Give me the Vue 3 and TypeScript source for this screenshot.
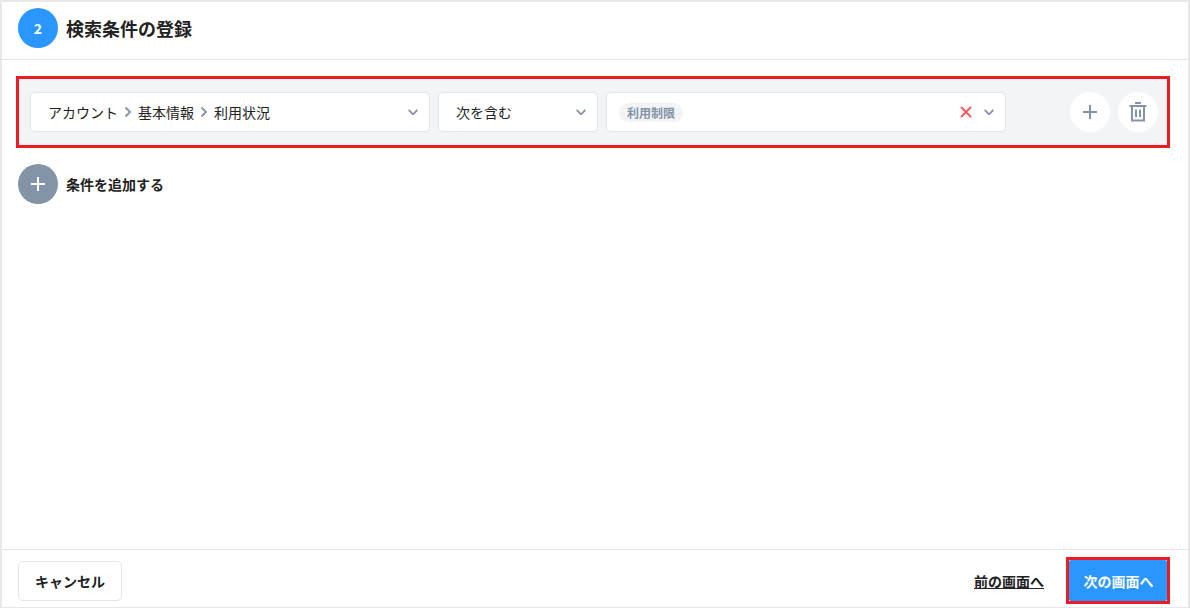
<template>
  <div class="page">
    <header class="head">
      <span class="step">2</span>
      <h1 class="title">検索条件の登録</h1>
    </header>

    <main class="body">
      <div class="highlight">
        <div class="condition">
          <div class="select field-wide">
            <div class="crumbs">
              <template v-for="(part, i) in fieldPath" :key="part">
                <svg v-if="i > 0" class="crumb-arrow" viewBox="0 0 8 12" fill="none">
                  <path d="M1.5 1.5L6 6L1.5 10.5" stroke="#8494a8" stroke-width="1.8" />
                </svg>
                <span>{{ part }}</span>
              </template>
            </div>
            <svg class="chevron" viewBox="0 0 10 7" fill="none">
              <path d="M0.7 1L5 5.3L9.3 1" stroke="#8494a8" stroke-width="1.8" />
            </svg>
          </div>
          <div class="select field-op">
            <span class="op-label">次を含む</span>
            <svg class="chevron" viewBox="0 0 10 7" fill="none">
              <path d="M0.7 1L5 5.3L9.3 1" stroke="#8494a8" stroke-width="1.8" />
            </svg>
          </div>
          <div class="select field-value">
            <span class="tag">利用制限</span>
            <svg class="clear" viewBox="0 0 12 12" fill="none">
              <path d="M1 1L11 11M11 1L1 11" stroke="#ff5a5f" stroke-width="2" />
            </svg>
            <svg class="chevron" viewBox="0 0 10 7" fill="none">
              <path d="M0.7 1L5 5.3L9.3 1" stroke="#8494a8" stroke-width="1.8" />
            </svg>
          </div>
          <div class="actions">
            <button class="round">
              <svg width="16" height="16" viewBox="0 0 16 16" fill="none">
                <path d="M8 1V15M1 8H15" stroke="#8494a8" stroke-width="2" />
              </svg>
            </button>
            <button class="round">
              <svg width="18" height="20" viewBox="0 0 18 20" fill="none">
                <path d="M0.5 4H17.5M6 1H12M3 4V18.5H15V4M7 7.5V15M11 7.5V15" stroke="#8494a8" stroke-width="2" />
              </svg>
            </button>
          </div>
        </div>
      </div>

      <div class="add-row">
        <span class="add-circle">
          <svg width="16" height="16" viewBox="0 0 16 16" fill="none">
            <path d="M8 1V15M1 8H15" stroke="#fff" stroke-width="2" />
          </svg>
        </span>
        <span class="add-label">条件を追加する</span>
      </div>
    </main>

    <footer class="foot">
      <button class="cancel">キャンセル</button>
      <div class="foot-right">
        <a class="prev">前の画面へ</a>
        <div class="next-frame">
          <button class="next">次の画面へ</button>
        </div>
      </div>
    </footer>
  </div>
</template>

<script setup lang="ts">
const fieldPath: string[] = ['アカウント', '基本情報', '利用状況']
</script>

<style>
html,
body {
  margin: 0;
  background: #fff;
}
</style>

<style scoped>
.page {
  box-sizing: border-box;
  width: 1190px;
  height: 608px;
  display: flex;
  flex-direction: column;
  border: 2px solid #e8e8e8;
  border-bottom-width: 1px;
  background: #fff;
  color: #222;
  font-family: "Noto Sans CJK JP", "Noto Sans", sans-serif;
}

.head {
  box-sizing: border-box;
  height: 58px;
  flex: none;
  display: flex;
  align-items: center;
  gap: 8px;
  padding: 0 16px 5px;
  border-bottom: 1px solid #e3e5e8;
}

.step {
  width: 40px;
  height: 40px;
  border-radius: 50%;
  background: #2a96ff;
  color: #fff;
  font-size: 14px;
  font-weight: 700;
  display: flex;
  align-items: center;
  justify-content: center;
}

.title {
  margin: 0;
  font-size: 18px;
  font-weight: 700;
  line-height: 24px;
}

.body {
  flex: 1;
  padding: 16px 18px 0 14px;
}

.highlight {
  box-sizing: border-box;
  height: 72px;
  width: 1154px;
  border: 3px solid #ed1c24;
  background: #f3f4f6;
  padding: 13px 9px 13px 11px;
}

.condition {
  display: flex;
  gap: 8px;
  height: 40px;
}

.select {
  box-sizing: border-box;
  flex: none;
  height: 40px;
  display: flex;
  align-items: center;
  padding: 0 11px 0 17px;
  background: #fff;
  border: 1px solid #e2e6ea;
  border-radius: 5px;
  font-size: 14px;
  color: #222;
}

.field-wide {
  width: 400px;
}

.field-op {
  width: 160px;
}

.field-value {
  width: 400px;
  padding-left: 12px;
}

.crumbs {
  display: flex;
  align-items: center;
  gap: 6px;
}

.crumb-arrow {
  width: 8px;
  height: 12px;
}

.chevron {
  width: 10px;
  height: 7px;
  margin-left: auto;
}

.tag {
  height: 19px;
  line-height: 19px;
  padding: 0 8px;
  border-radius: 10px;
  background: #f1f3f5;
  color: #8494a8;
  font-size: 12px;
  font-weight: 700;
}

.clear {
  width: 12px;
  height: 12px;
  margin-left: auto;
}

.clear + .chevron {
  margin-left: 12px;
}

.actions {
  display: flex;
  flex: none;
  gap: 8px;
  margin-left: 56px;
}

.round {
  width: 40px;
  height: 40px;
  padding: 0;
  border: none;
  border-radius: 50%;
  background: #fff;
  display: flex;
  align-items: center;
  justify-content: center;
}

.add-row {
  display: flex;
  align-items: center;
  gap: 8px;
  margin: 16px 0 0 2px;
}

.add-circle {
  width: 40px;
  height: 40px;
  border-radius: 50%;
  background: #8494a8;
  display: flex;
  align-items: center;
  justify-content: center;
}

.add-label {
  font-size: 14px;
  font-weight: 700;
}

.foot {
  box-sizing: border-box;
  height: 58px;
  flex: none;
  display: flex;
  align-items: flex-start;
  justify-content: space-between;
  padding: 7px 18px 0 16px;
  border-top: 1px solid #e3e5e8;
}

.cancel {
  width: 104px;
  height: 40px;
  margin-top: 4px;
  background: #fff;
  border: 1px solid #e2e6ea;
  border-radius: 5px;
  font-family: inherit;
  font-size: 14px;
  font-weight: 700;
  color: #222;
}

.foot-right {
  display: flex;
  align-items: center;
  gap: 22px;
}

.prev {
  font-size: 14px;
  font-weight: 700;
  color: #222;
  text-decoration: underline;
}

.next-frame {
  box-sizing: border-box;
  width: 104px;
  height: 47px;
  border: 3px solid #ed1c24;
}

.next {
  display: block;
  width: 100%;
  height: 100%;
  padding: 0 0 0 1px;
  border: none;
  border-radius: 2px;
  background: #2a96ff;
  color: #fff;
  font-family: inherit;
  font-size: 14px;
  font-weight: 700;
}
</style>
